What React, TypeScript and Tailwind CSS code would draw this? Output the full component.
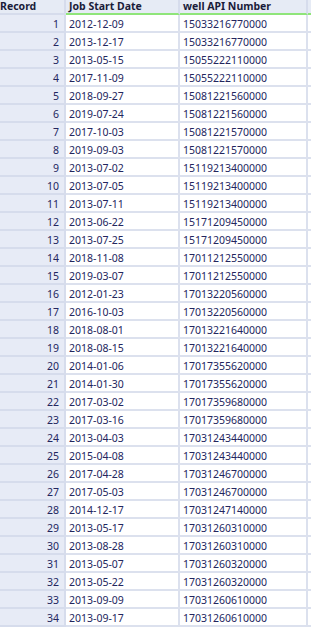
import React from 'react';

const rows: [string, string][] = [
  ['2012-12-09', '15033216770000'],
  ['2013-12-17', '15033216770000'],
  ['2013-05-15', '15055222110000'],
  ['2017-11-09', '15055222110000'],
  ['2018-09-27', '15081221560000'],
  ['2019-07-24', '15081221560000'],
  ['2017-10-03', '15081221570000'],
  ['2019-09-03', '15081221570000'],
  ['2013-07-02', '15119213400000'],
  ['2013-07-05', '15119213400000'],
  ['2013-07-11', '15119213400000'],
  ['2013-06-22', '15171209450000'],
  ['2013-07-25', '15171209450000'],
  ['2018-11-08', '17011212550000'],
  ['2019-03-07', '17011212550000'],
  ['2012-01-23', '17013220560000'],
  ['2016-10-03', '17013220560000'],
  ['2018-08-01', '17013221640000'],
  ['2018-08-15', '17013221640000'],
  ['2014-01-06', '17017355620000'],
  ['2014-01-30', '17017355620000'],
  ['2017-03-02', '17017359680000'],
  ['2017-03-16', '17017359680000'],
  ['2013-04-03', '17031243440000'],
  ['2015-04-08', '17031243440000'],
  ['2017-04-28', '17031246700000'],
  ['2017-05-03', '17031246700000'],
  ['2014-12-17', '17031247140000'],
  ['2013-05-17', '17031260310000'],
  ['2013-08-28', '17031260310000'],
  ['2013-05-07', '17031260320000'],
  ['2013-05-22', '17031260320000'],
  ['2013-09-09', '17031260610000'],
  ['2013-09-17', '17031260610000'],
];

export default function App() {
  return (
    <div className="w-[311px] h-[628px] overflow-hidden bg-white font-['Noto_Sans',sans-serif] text-[10.5px]">
      {/* header */}
      <div className="flex h-[15px] bg-[#e6ebf5] font-bold text-[#1a1c3a] leading-[13px]">
        <div className="w-[66px] shrink-0 border-r-2 border-b-2 border-[#d6dcec] whitespace-nowrap">Record</div>
        <div className="w-[114px] shrink-0 border-r-2 border-[#d6dcec] border-b-2 border-b-[#8fe57a] pl-[3px] whitespace-nowrap">
          Job Start Date
        </div>
        <div className="w-[128px] shrink-0 border-r-2 border-[#d6dcec] border-b-2 border-b-[#8fe57a] pl-[3px] whitespace-nowrap">
          well API Number
        </div>
        <div className="flex-1 border-b-2 border-[#8fe57a]" />
      </div>

      {rows.map(([date, api], i) => (
        <div key={i} className="flex h-[18px] text-[#23265e] leading-[13px]">
          <div className="w-[66px] shrink-0 bg-[#e7ebf6] border-r-2 border-b-2 border-[#d6dcec] pr-[5px] pt-[3px] text-right">
            {i + 1}
          </div>
          <div className="w-[114px] shrink-0 border-r-2 border-b-2 border-[#dce1ee] pl-[3px] pt-[3px]">{date}</div>
          <div className="w-[128px] shrink-0 border-r-2 border-b-2 border-[#dce1ee] pl-[3px] pt-[3px]">{api}</div>
          <div className="flex-1 border-b-2 border-[#dce1ee]" />
        </div>
      ))}
    </div>
  );
}
